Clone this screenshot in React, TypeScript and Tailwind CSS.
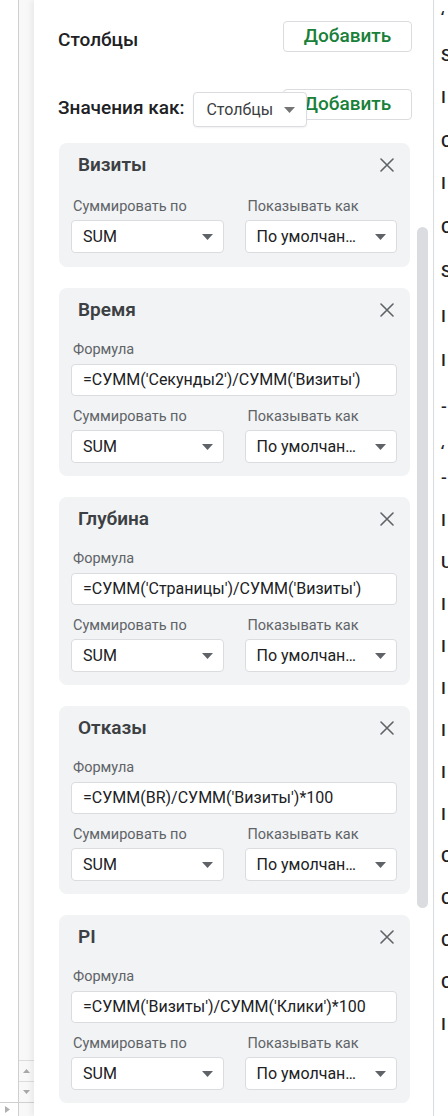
import React from "react";

const FONT = { fontFamily: "Roboto, 'Noto Sans', Arial, sans-serif" };

function Caret({ color = "#5f6368" }: { color?: string }) {
  return (
    <svg width="11" height="6" viewBox="0 0 11 6" className="shrink-0">
      <path d="M0 0H11L5.5 6Z" fill={color} />
    </svg>
  );
}

function CloseIcon() {
  return (
    <svg width="14" height="14" viewBox="0 0 14 14" className="shrink-0">
      <path d="M1 1L13 13M13 1L1 13" stroke="#5f6368" strokeWidth="1.6" strokeLinecap="round" />
    </svg>
  );
}

function Select({ value }: { value: string }) {
  return (
    <div className="h-[33px] rounded-[4px] border border-[#dadce0] bg-white flex items-center justify-between pl-[11px] pr-[10px]">
      <span className="text-[16px] leading-5 text-[#202124] whitespace-nowrap">{value}</span>
      <Caret />
    </div>
  );
}

function Card({ title, formula }: { title: string; formula?: string }) {
  return (
    <div className={`rounded-[8px] bg-[#f1f3f4] pt-3 pl-3 pr-[13px] ${formula ? "pb-[13px]" : "pb-[14px]"}`}>
      <div className="flex items-center justify-between h-5 pl-[7px] pr-[3px]">
        <span className="text-[19px] leading-5 font-semibold text-[#3c4043]">{title}</span>
        <CloseIcon />
      </div>
      {formula ? (
        <>
          <div className="mt-[22px] pl-[2px] text-[14.5px] leading-4 text-[#5f6368]">Формула</div>
          <div className="mt-[6px] h-[32px] rounded-[4px] border border-[#dadce0] bg-white flex items-center pl-[11px]">
            <span className="text-[16px] leading-5 text-[#202124] whitespace-nowrap">{formula}</span>
          </div>
        </>
      ) : null}
      <div className={`grid grid-cols-2 gap-x-[21px] ${formula ? "mt-[13px]" : "mt-6"}`}>
        <div className="pl-[2px] text-[14.5px] leading-4 text-[#5f6368] whitespace-nowrap">Суммировать по</div>
        <div className="pl-[3px] text-[14.5px] leading-4 text-[#5f6368] whitespace-nowrap">Показывать как</div>
      </div>
      <div className="grid grid-cols-2 gap-x-[21px] mt-[5px]">
        <Select value="SUM" />
        <Select value="По умолчан…" />
      </div>
    </div>
  );
}

const glyphs: { ch: string; c: number }[] = [
  { ch: "ʻ", c: 17 },
  { ch: "S", c: 55 },
  { ch: "I", c: 97 },
  { ch: "C", c: 141 },
  { ch: "I", c: 183 },
  { ch: "C", c: 227 },
  { ch: "S", c: 271 },
  { ch: "I", c: 316 },
  { ch: "I", c: 360 },
  { ch: "-", c: 406 },
  { ch: "ʻ", c: 451 },
  { ch: "-", c: 477 },
  { ch: "I", c: 520 },
  { ch: "U", c: 562 },
  { ch: "I", c: 604 },
  { ch: "I", c: 646 },
  { ch: "I", c: 688 },
  { ch: "I", c: 730 },
  { ch: "I", c: 772 },
  { ch: "I", c: 814 },
  { ch: "C", c: 856 },
  { ch: "C", c: 898 },
  { ch: "C", c: 940 },
  { ch: "C", c: 982 },
  { ch: "I", c: 1024 },
];

export default function App() {
  return (
    <div className="w-[448px] h-[1116px] overflow-hidden flex bg-white" style={FONT}>
      {/* left gutter */}
      <div className="w-[34px] h-full flex shrink-0">
        <div className="w-[18px] h-full flex flex-col">
          <div className="flex-1" />
          <div className="h-[14px] border-t border-[#d0d0d0] flex items-center justify-center pr-[4px]">
            <svg width="5" height="7" viewBox="0 0 5 7"><path d="M0 0L5 3.5L0 7Z" fill="#b0b0b0" /></svg>
          </div>
        </div>
        <div className="w-[16px] h-full border-l border-[#cfcfcf] bg-[#f8f8f8] flex flex-col">
          <div className="flex-1" />
          <div className="h-[21px] border-t border-[#dcdcdc] flex items-center justify-center">
            <svg width="7" height="4" viewBox="0 0 7 4"><path d="M0 4L3.5 0L7 4Z" fill="#a8a8a8" /></svg>
          </div>
          <div className="h-[21px] border-t border-[#dcdcdc] flex items-center justify-center">
            <svg width="7" height="4" viewBox="0 0 7 4"><path d="M0 0L7 0L3.5 4Z" fill="#a8a8a8" /></svg>
          </div>
          <div className="h-[14px] border-t border-[#d0d0d0]" />
        </div>
      </div>

      {/* side panel */}
      <div className="w-[400px] h-full shrink-0 flex bg-white border-r border-[#dadce0] shadow-[-3px_0_6px_rgba(0,0,0,0.06)]">
        <div className="w-[380px] flex flex-col">
          <div className="flex items-start justify-between pl-[24px] pr-[2px] pt-[21px]">
            <span className="mt-[7px] text-[19px] leading-6 font-medium text-[#202124]">Столбцы</span>
            <button className="w-[129px] h-[31px] rounded-[4px] border border-[#dadce0] bg-white text-[19px] font-medium text-[#188038]">
              Добавить
            </button>
          </div>
          <div className="relative mt-[37px] h-[38px] pl-[24px] pr-[2px] flex items-end">
            <button className="absolute right-[2px] top-0 w-[129px] h-[31px] rounded-[4px] border border-[#dadce0] bg-white text-[19px] font-medium text-[#188038]">
              Добавить
            </button>
            <div className="relative z-10 flex items-end gap-[9px]">
              <span className="mb-[7px] text-[19px] leading-6 font-medium text-[#202124] whitespace-nowrap">Значения как:</span>
              <div className="w-[114px] h-[35px] rounded-[4px] border border-[#dadce0] bg-white flex items-center justify-between pl-[12px] pr-[11px] shadow-[0_1px_2px_rgba(0,0,0,0.06)]">
                <span className="text-[16px] leading-5 text-[#3c4043]">Столбцы</span>
                <Caret color="#757575" />
              </div>
            </div>
          </div>
          <div className="mt-[16px] ml-[25px] mr-[4px] flex flex-col gap-[21px]">
            <Card title="Визиты" />
            <Card title="Время" formula="=СУММ('Секунды2')/СУММ('Визиты')" />
            <Card title="Глубина" formula="=СУММ('Страницы')/СУММ('Визиты')" />
            <Card title="Отказы" formula="=СУММ(BR)/СУММ('Визиты')*100" />
            <Card title="PI" formula="=СУММ('Визиты')/СУММ('Клики')*100" />
          </div>
        </div>
        <div className="w-[19px]">
          <div className="mt-[227px] ml-[3px] w-[11px] h-[681px] rounded-full bg-[#dadce0]" />
        </div>
      </div>

      {/* sheet behind */}
      <div className="relative w-[14px] h-full overflow-hidden">
        {glyphs.map((g, i) => (
          <span
            key={i}
            className="absolute left-[7px] text-[17px] leading-[22px] font-medium text-[#202124]"
            style={{ top: g.c - 11 }}
          >
            {g.ch}
          </span>
        ))}
      </div>
    </div>
  );
}
